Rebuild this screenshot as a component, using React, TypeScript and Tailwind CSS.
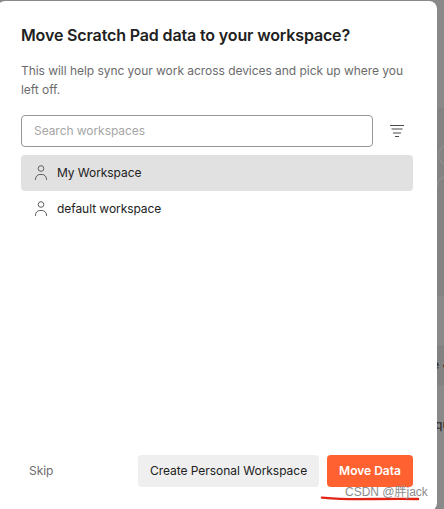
import { useState } from "react";

const WORKSPACES = [
  { id: "my", name: "My Workspace" },
  { id: "default", name: "default workspace" },
];

function UserIcon() {
  return (
    <svg className="h-4 w-4 shrink-0" viewBox="0 0 16 16" fill="none" stroke="#5f5f5f" aria-hidden="true">
      <circle cx="8" cy="3.5" r="2.8" />
      <path d="M2.5 15v-.9c0-2.6 2-4.6 4.4-4.6h2.2c2.4 0 4.4 2 4.4 4.6v.9" />
    </svg>
  );
}

function FilterIcon() {
  return (
    <svg className="h-4 w-4" viewBox="0 0 16 16" aria-hidden="true">
      <path d="M1 2.5h14" stroke="#4a4a4a" />
      <path d="M2.5 6h11" stroke="#a3a3a3" strokeWidth="2" />
      <path d="M4 10h8" stroke="#a3a3a3" strokeWidth="2" />
      <path d="M6 13.5h4" stroke="#4a4a4a" />
    </svg>
  );
}

// Dimmed strip of the page that shows past the dialog's right edge
function Backdrop() {
  return (
    <div className="absolute inset-0 flex flex-col overflow-hidden bg-[#898989] text-[12px] text-[#303030]">
      <div className="h-[108px]" />
      <div className="relative h-[188px] bg-[#838383]">
        <svg className="absolute right-0 top-9 h-12 w-2" viewBox="0 0 8 48" fill="none" stroke="#8c8c8c" strokeWidth="2" aria-hidden="true">
          <path d="M8 2C1 6 1 16 8 20M0 46C1 38 4 34 8 33" />
        </svg>
      </div>
      <div className="h-[49px] bg-[#8a8a8a]" />
      <div className="flex h-10 items-center bg-[#828282] pl-[432px] font-semibold whitespace-nowrap">e •</div>
      <div className="flex h-20 items-center bg-[#898989] pl-[435px] font-medium whitespace-nowrap">qu</div>
    </div>
  );
}

export default function App() {
  const [selected, setSelected] = useState("my");
  const [query, setQuery] = useState("");

  const visible = WORKSPACES.filter((w) => w.name.toLowerCase().includes(query.toLowerCase()));

  return (
    <div className="relative h-[509px] w-[444px] overflow-hidden font-['Inter',sans-serif]">
      <Backdrop />

      <div
        role="dialog"
        className="relative -ml-[3px] mt-px flex h-[510px] w-[440px] flex-col rounded-lg bg-white px-6 pt-6"
      >
        <h1 className="text-[16px] leading-5 font-semibold tracking-[-0.14px] text-[#212121]">
          Move Scratch Pad data to your workspace?
        </h1>
        <p className="mt-4 text-[12px] leading-[19px] tracking-[-0.045px] text-[#6b6b6b]">
          This will help sync your work across devices and pick up where you left off.
        </p>

        <div className="mt-4 flex items-center">
          <input
            className="h-8 w-[352px] rounded border border-[#979797] px-3 pb-px text-[12px] tracking-[-0.06px] text-[#212121] outline-none placeholder:text-[#a6a6a6]"
            placeholder="Search workspaces"
            value={query}
            onChange={(e) => setQuery(e.target.value)}
          />
          <button className="ml-2 flex h-8 w-8 items-center justify-center" aria-label="filter">
            <FilterIcon />
          </button>
        </div>

        <ul className="mt-2 flex-1">
          {visible.map((w) => (
            <li key={w.id}>
              <button
                className={`flex h-9 w-full items-center gap-2 rounded px-3 text-[12px] tracking-[-0.06px] text-[#212121] ${
                  selected === w.id ? "bg-[#e1e1e1]" : ""
                }`}
                onClick={() => setSelected(w.id)}
              >
                <UserIcon />
                {w.name}
              </button>
            </li>
          ))}
        </ul>

        <div className="mb-6 flex items-center text-[12px]">
          <button className="h-8 px-2 tracking-[-0.06px] text-[#6b6b6b]">Skip</button>
          <button className="ml-auto h-8 w-[181px] rounded bg-[#efefef] tracking-[-0.03px] text-[#212121]">
            Create Personal Workspace
          </button>
          <button className="ml-2 h-8 w-[86px] rounded bg-[#ff6230] font-semibold text-white">Move Data</button>
        </div>
      </div>

      {/* Hand-drawn underline below the primary action */}
      <svg className="absolute top-[494px] left-[320px] h-2 w-[102px]" viewBox="0 0 102 8" fill="none" aria-hidden="true">
        <path d="M2 3.6C14 4.5 24 5.2 38 5.1C58 5 80 4.6 98 5" stroke="#e32414" strokeWidth="2.4" strokeLinecap="round" />
      </svg>
      <span className="absolute top-[484px] left-[345px] font-['Liberation_Sans','Noto_Sans_CJK_SC',sans-serif] text-[12px] leading-4 whitespace-nowrap text-[#8c8c8c]">
        CSDN @胖jack
      </span>
    </div>
  );
}
